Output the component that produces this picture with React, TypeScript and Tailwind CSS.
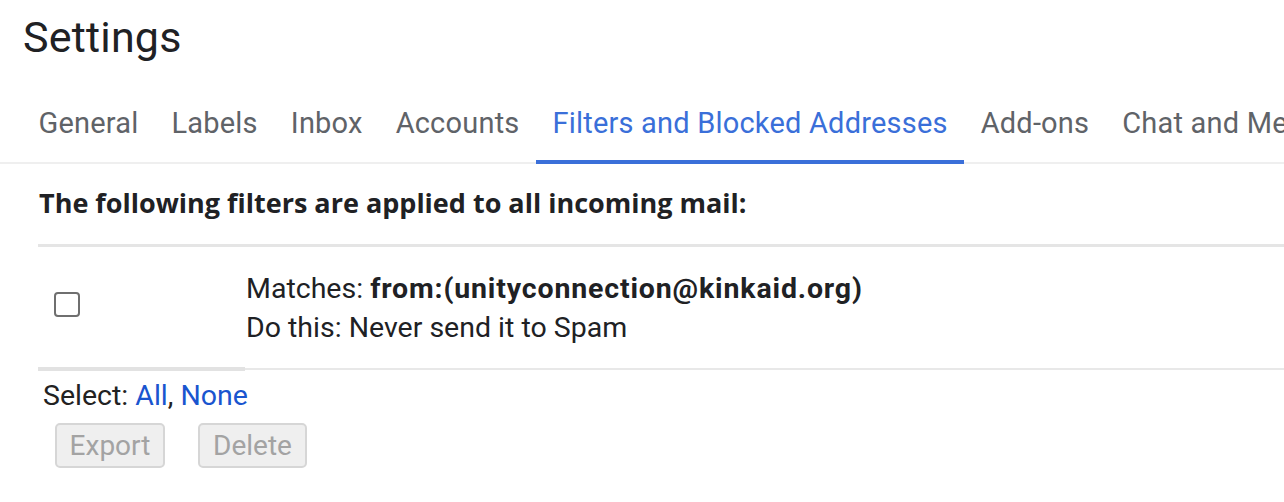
import React from "react";

const tabs = ["General", "Labels", "Inbox", "Accounts", "Filters and Blocked Addresses", "Add-ons", "Chat and Meet"];

export default function App() {
  return (
    <div className="h-[502px] w-full overflow-hidden bg-white font-['Roboto',sans-serif] text-[#202124]">
      <h1 className="pl-[23px] pt-[13px] text-[43px] leading-[48px] font-normal tracking-[0.2px]">Settings</h1>

      <div className="mt-[46px] flex whitespace-nowrap border-b-2 border-[#efefef] pl-[22px]">
        {tabs.map((t) => {
          const active = t === "Filters and Blocked Addresses";
          return (
            <div
              key={t}
              className={
                active
                  ? "-mb-[2px] shrink-0 border-b-4 border-[#3a6fd9] px-[16.5px] pb-[21px] text-[29px] leading-[32px] tracking-[0.2px] text-[#3a6fd9]"
                  : "-mb-[2px] shrink-0 border-b-4 border-transparent px-[16.5px] pb-[21px] text-[29px] leading-[32px] tracking-[0.2px] text-[#5f6368]"
              }
            >
              {t}
            </div>
          );
        })}
      </div>

      <div className="mt-[23px] pl-[39px] font-['Open_Sans',sans-serif] text-[27px] font-bold leading-[32px]">
        The following filters are applied to all incoming mail:
      </div>

      <div className="ml-[38px] mt-[25px] flex items-start border-t-[3px] border-[#e5e5e5]">
        <div className="h-[124px] w-[207px] shrink-0 border-b-4 border-[#e2e2e2] pl-[16px] pt-[45px]">
          <div className="h-[25px] w-[26px] rounded-[4px] border-2 border-[#6f6f6f]" />
        </div>
        <div className="h-[123px] flex-1 border-b-2 border-[#e8e8e8] pl-[1px] pt-[22px] text-[28.5px] leading-[39px] text-[#202124]">
          <div>
            Matches: <b className="tracking-[0.85px]">from:(unityconnection@kinkaid.org)</b>
          </div>
          <div>Do this: Never send it to Spam</div>
        </div>
      </div>

      <div className="ml-[43px] mt-[9px] text-[28.5px] leading-[32px] text-[#222]">
        Select: <span className="text-[#1a55cf]">All</span>, <span className="text-[#1a55cf]">None</span>
      </div>

      <div className="ml-[55px] mt-[11px] flex gap-[33px]">
        <button className="h-[45px] w-[110px] rounded-[5px] border-2 border-[#d6d6d6] bg-[#efefef] text-[28px] text-[#a3a3a3]">
          Export
        </button>
        <button className="h-[45px] w-[109px] rounded-[5px] border-2 border-[#d6d6d6] bg-[#efefef] text-[28px] text-[#a3a3a3]">
          Delete
        </button>
      </div>
    </div>
  );
}
